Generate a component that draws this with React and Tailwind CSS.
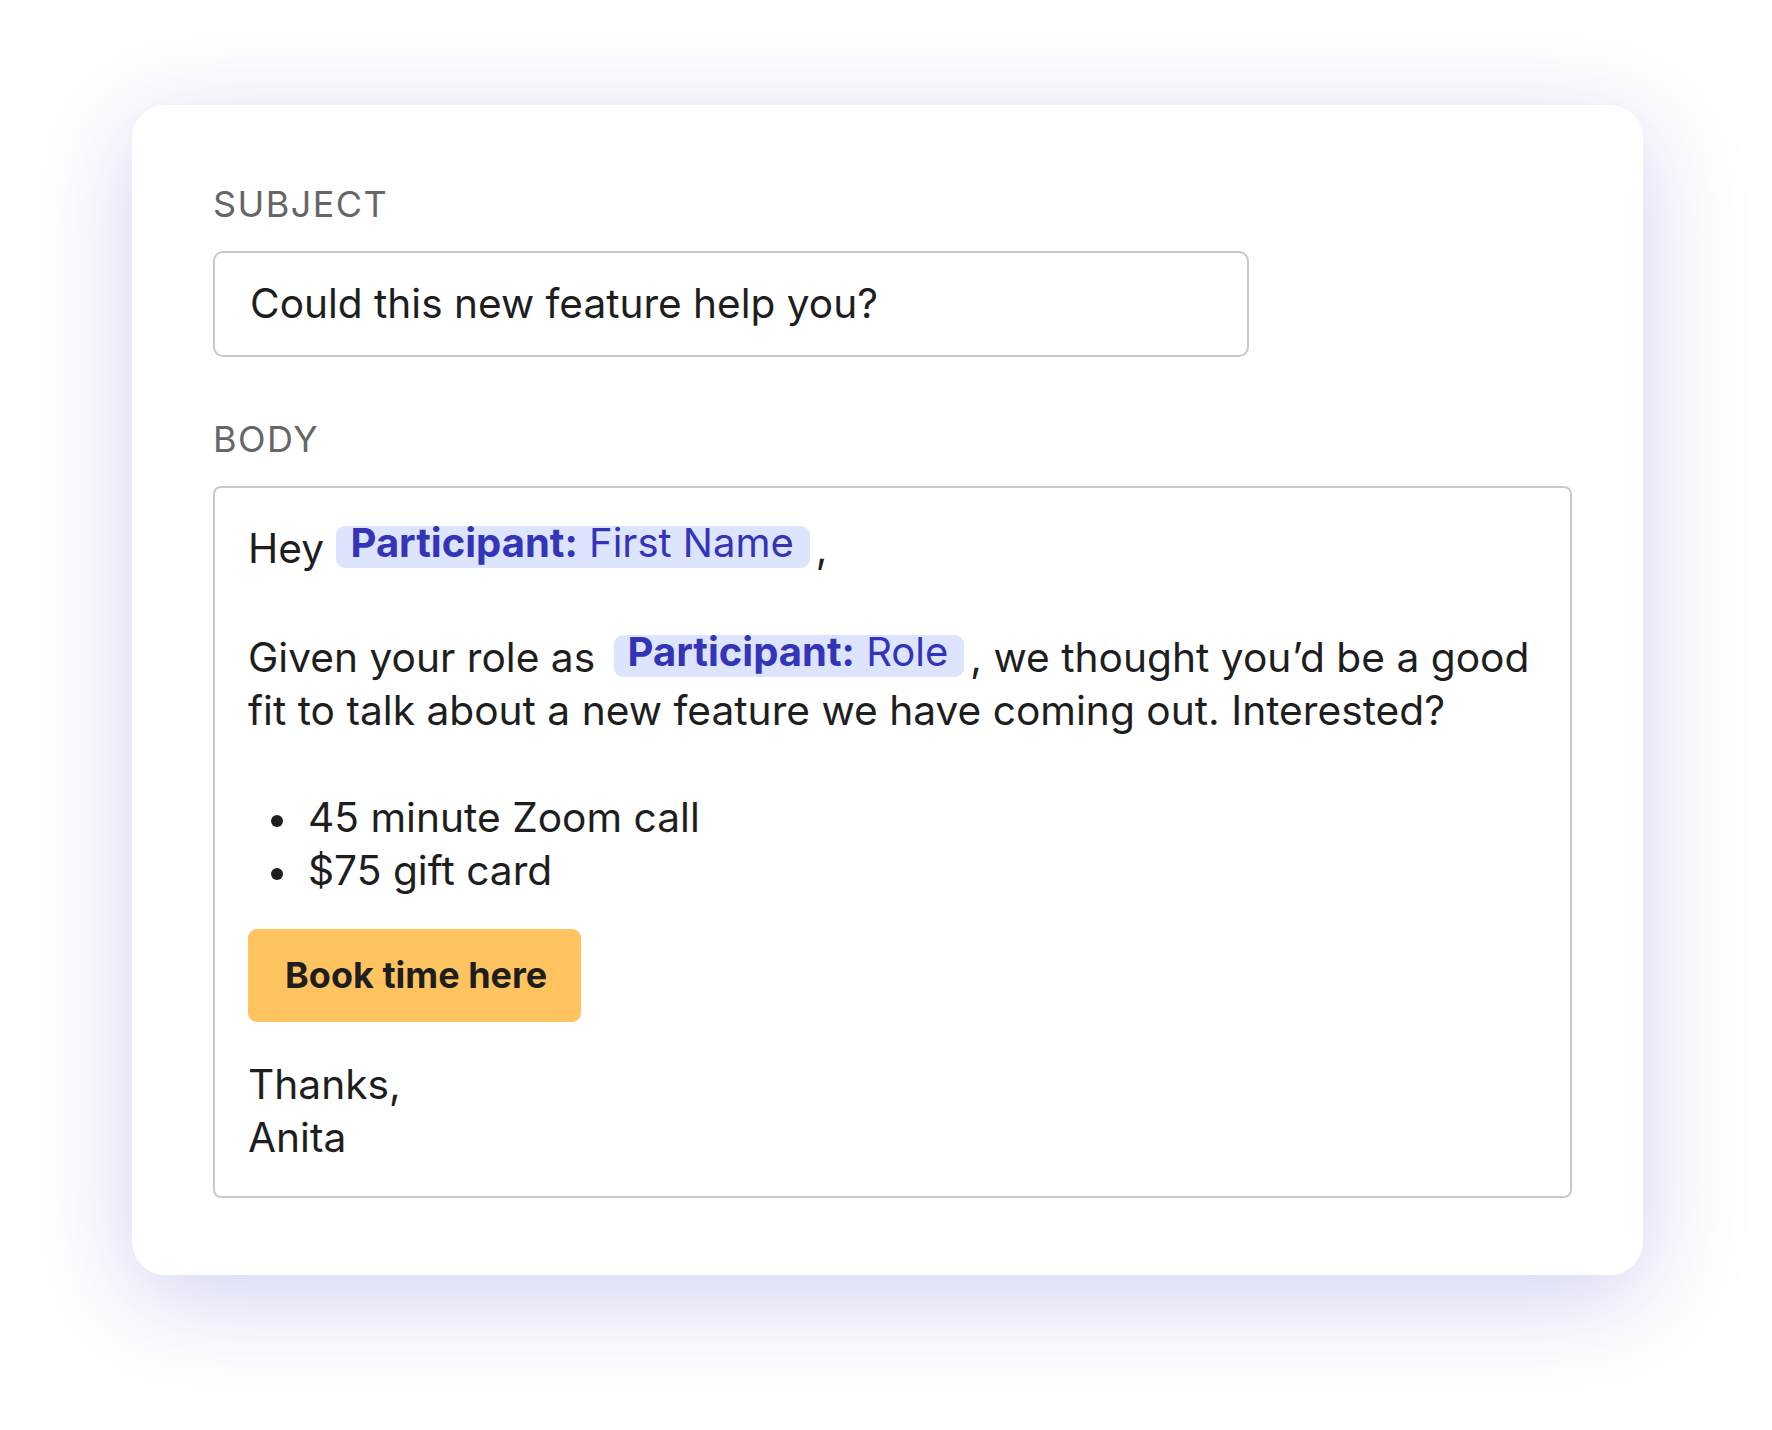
export default function App() {
  const font = { fontFamily: "Inter, 'Noto Sans', sans-serif" };

  return (
    <div className="min-h-screen bg-white pt-[105px] pl-[132px]" style={font}>
      <div className="w-[1511px] rounded-[33px] bg-white pt-[81px] pl-[81px] pr-[71px] pb-[77px] shadow-[0_22px_100px_rgba(70,80,200,0.26)]">
        <div className="text-[36px] leading-[36px] tracking-[0.04em] text-[#666666]">SUBJECT</div>
        <div className="mt-[29px] w-[1036px] rounded-[10px] border-2 border-[#c6cacd] pt-[24px] pb-[25px] pl-[35px] text-[40.6px] leading-[53px] text-[#1e1e1e]">
          Could this new feature help you?
        </div>

        <div className="mt-[64px] text-[36px] leading-[36px] tracking-[0.04em] text-[#666666]">BODY</div>
        <div className="mt-[29px] flex flex-col items-start rounded-[8px] border-2 border-[#c6cacd] pt-[34px] pb-[32px] pl-[33px] pr-[20px] text-[40.7px] leading-[53px] text-[#1e1e1e]">
          <p>
            Hey <Tag label="First Name" className="ml-[1px]" />,
          </p>
          <p className="mt-[56px] whitespace-nowrap">
            Given your role as <Tag label="Role" className="ml-[7px]" />, we thought you’d be a good
            <br />
            fit to talk about a new feature we have coming out. Interested?
          </p>
          <ul className="mt-[54px] pl-[23px]">
            {["45 minute Zoom call", "$75 gift card"].map((item) => (
              <li key={item} className="flex items-center">
                <span className="mt-[6px] h-[12px] w-[12px] rounded-full bg-[#1e1e1e]" />
                <span className="ml-[25px]">{item}</span>
              </li>
            ))}
          </ul>
          <button className="mt-[32px] flex h-[93px] w-[333px] items-center rounded-[9px] bg-[#ffc35f] pl-[37px] text-[36px] font-bold text-[#1e1e1e]">
            Book time here
          </button>
          <p className="mt-[36px]">
            Thanks,
            <br />
            Anita
          </p>
        </div>
      </div>
    </div>
  );
}

function Tag({ label, className = "" }) {
  return (
    <span
      className={`inline-block rounded-[9px] bg-[#dce5fd] pl-[14px] pr-[16px] pb-[9px] align-[6px] text-[40px] leading-[33px] text-[#3434b9] mr-[6px] ${className}`}
    >
      <span className="font-bold">Participant:</span> {label}
    </span>
  );
}
